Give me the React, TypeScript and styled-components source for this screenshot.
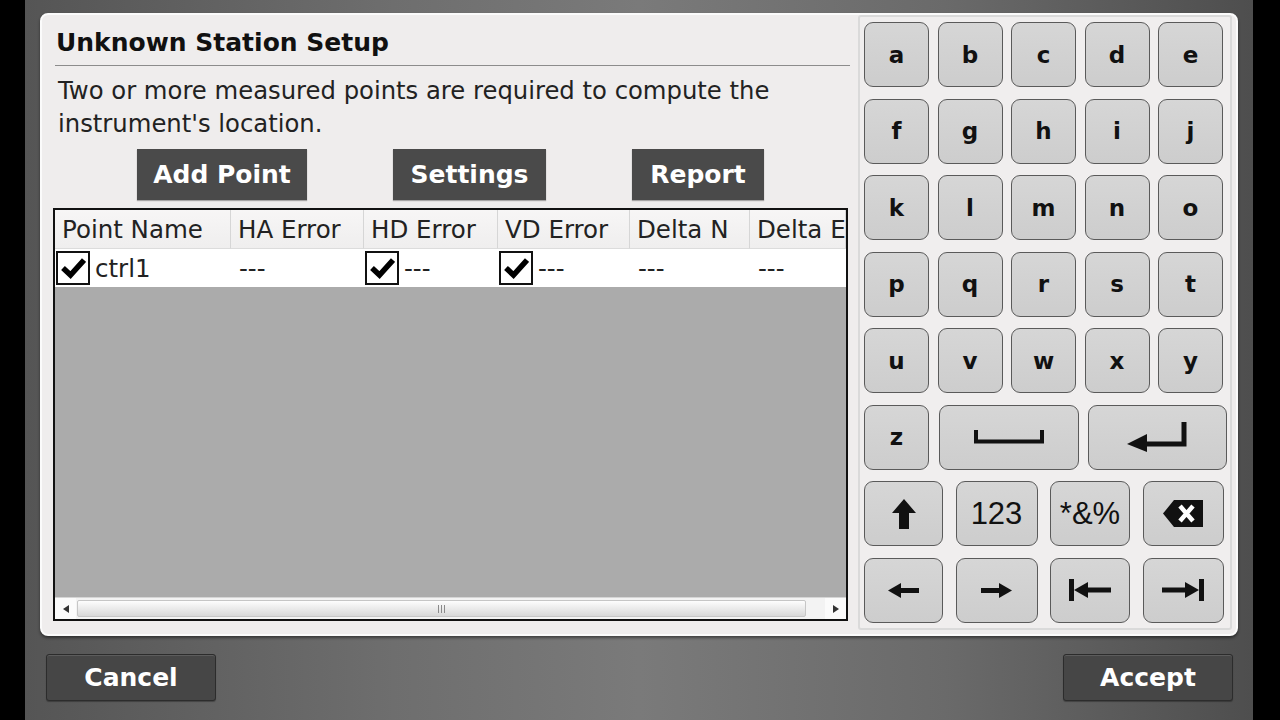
import styled, { createGlobalStyle } from 'styled-components';

const GlobalStyle = createGlobalStyle`
  html, body {
    margin: 0;
    padding: 0;
    background: #000;
    overflow: hidden;
  }
  body {
    font-family: "DejaVu Sans", "Open Sans", sans-serif;
    color: #1a1a1a;
  }
`;

const columns = ['Point Name', 'HA Error', 'HD Error', 'VD Error', 'Delta N', 'Delta E'];

// each cell of the single row: checked state (undefined = no box) and text
const row = [
  { check: true, text: 'ctrl1' },
  { text: '---' },
  { check: true, text: '---' },
  { check: true, text: '---' },
  { text: '---' },
  { text: '---' },
];

const letterRows = [
  ['a', 'b', 'c', 'd', 'e'],
  ['f', 'g', 'h', 'i', 'j'],
  ['k', 'l', 'm', 'n', 'o'],
  ['p', 'q', 'r', 's', 't'],
  ['u', 'v', 'w', 'x', 'y'],
];

const CheckMark = () => (
  <svg width="25" height="22" viewBox="0 0 25 22">
    <path d="M2 11 L9.5 18 L23 3" fill="none" stroke="#000" strokeWidth="5.5" strokeLinejoin="miter" />
  </svg>
);

const SpaceIcon = () => (
  <svg width="70" height="14" viewBox="0 0 70 14">
    <path d="M2 0 V11.5 H68 V0" fill="none" stroke="#111" strokeWidth="4" />
  </svg>
);

const EnterIcon = () => (
  <svg width="62" height="30" viewBox="0 0 62 30">
    <path d="M57 0 V22 H18" fill="none" stroke="#111" strokeWidth="5" />
    <path d="M0 22 L20 12 L20 30 Z" fill="#111" />
  </svg>
);

const ShiftIcon = () => (
  <svg width="24" height="30" viewBox="0 0 24 30">
    <path d="M12 0 L24 14 L17 14 L17 30 L7 30 L7 14 L0 14 Z" fill="#111" />
  </svg>
);

const BackspaceIcon = () => (
  <svg width="40" height="27" viewBox="0 0 40 27">
    <path d="M0 13.5 L11 0 H40 V27 H11 Z" fill="#111" />
    <path d="M17 6 L30 21 M30 6 L17 21" stroke="#fff" strokeWidth="4.5" />
  </svg>
);

const ArrowIcon = ({ flip }: { flip?: boolean }) => (
  <svg width="31" height="15" viewBox="0 0 31 15" style={flip ? { transform: 'scaleX(-1)' } : undefined}>
    <path d="M0 7.5 L13 0 V15 Z" fill="#111" />
    <path d="M10 7.5 H31" stroke="#111" strokeWidth="5" />
  </svg>
);

const TabIcon = ({ flip }: { flip?: boolean }) => (
  <svg width="42" height="22" viewBox="0 0 42 22" style={flip ? { transform: 'scaleX(-1)' } : undefined}>
    <path d="M2.5 0 V22" stroke="#111" strokeWidth="5" />
    <path d="M5 11 L19 3 V19 Z" fill="#111" />
    <path d="M16 11 H42" stroke="#111" strokeWidth="5" />
  </svg>
);

const App = () => {
  return (
    <>
      <GlobalStyle />
      <Device>
        <Panel>
          <SetupPane>
            <Title>Unknown Station Setup</Title>
            <Rule />
            <Description>
              Two or more measured points are required to compute the
              <br />
              instrument's location.
            </Description>
            <ActionRow>
              <ActionButton $width={170}>Add Point</ActionButton>
              <ActionButton $width={153}>Settings</ActionButton>
              <ActionButton $width={132}>Report</ActionButton>
            </ActionRow>
            <PointTable>
              <TableGrid>
                {columns.map((c) => (
                  <HeadCell key={c}>{c}</HeadCell>
                ))}
                {row.map((cell, i) => (
                  <DataCell key={i} $boxed={cell.check !== undefined}>
                    {cell.check !== undefined && (
                      <CheckBox>{cell.check && <CheckMark />}</CheckBox>
                    )}
                    <span>{cell.text}</span>
                  </DataCell>
                ))}
              </TableGrid>
              <EmptyArea />
              <ScrollBar>
                <ScrollArrow>
                  <svg width="6" height="8" viewBox="0 0 6 8">
                    <path d="M0 4 L6 0 V8 Z" fill="#333" />
                  </svg>
                </ScrollArrow>
                <ScrollTrack>
                  <ScrollThumb>
                    <Grip />
                  </ScrollThumb>
                </ScrollTrack>
                <ScrollArrow>
                  <svg width="6" height="8" viewBox="0 0 6 8">
                    <path d="M6 4 L0 0 V8 Z" fill="#333" />
                  </svg>
                </ScrollArrow>
              </ScrollBar>
            </PointTable>
          </SetupPane>

          <KeyPane>
            {letterRows.map((keys, r) => (
              <KeyRow key={r} $gap={8.5}>
                {keys.map((k) => (
                  <Key key={k} $width={65}>{k}</Key>
                ))}
              </KeyRow>
            ))}
            <KeyRow $gap={9.5}>
              <Key $width={65}>z</Key>
              <Key $width={140}><SpaceIcon /></Key>
              <Key $width={139}><EnterIcon /></Key>
            </KeyRow>
            <KeyRow $gap={12.5}>
              <Key $width={79}><ShiftIcon /></Key>
              <Key $width={82} $plain>123</Key>
              <Key $width={80} $plain>*&amp;%</Key>
              <Key $width={81}><BackspaceIcon /></Key>
            </KeyRow>
            <KeyRow $gap={12.5}>
              <Key $width={79}><ArrowIcon /></Key>
              <Key $width={82}><ArrowIcon flip /></Key>
              <Key $width={80}><TabIcon /></Key>
              <Key $width={81}><TabIcon flip /></Key>
            </KeyRow>
          </KeyPane>
        </Panel>

        <BottomBar>
          <FooterButton>Cancel</FooterButton>
          <FooterButton>Accept</FooterButton>
        </BottomBar>
      </Device>
    </>
  );
};

const Device = styled.div`
  width: 1228px;
  height: 720px;
  margin-left: 25px;
  box-sizing: border-box;
  padding: 13px 15px 0 15px;
  background: linear-gradient(90deg, #555 0%, #6e6e6e 30%, #7a7a7a 50%, #6a6a6a 75%, #4e4e4e 100%);
  display: flex;
  flex-direction: column;
`;

const Panel = styled.div`
  height: 623px;
  box-sizing: border-box;
  display: flex;
  background: #efeded;
  border: 2px solid #fbfbfb;
  border-radius: 8px;
  box-shadow: 0 2px 3px rgba(0, 0, 0, 0.45);
`;

const SetupPane = styled.div`
  width: 812px;
  flex-shrink: 0;
  box-sizing: border-box;
  padding: 0 6px 0 11px;
  display: flex;
  flex-direction: column;
`;

const Title = styled.div`
  padding: 13px 0 0 3px;
  font-size: 25px;
  line-height: 30px;
  font-weight: 700;
  color: #111;
`;

const Rule = styled.div`
  margin: 7px -2px 0 2px;
  border-bottom: 1px solid #8c8c8c;
`;

const Description = styled.div`
  margin-top: 8px;
  padding-left: 5px;
  font-size: 24.3px;
  line-height: 33px;
  color: #222;
`;

const ActionRow = styled.div`
  margin-top: 9px;
  display: flex;
  justify-content: center;
  gap: 86px;
`;

const ActionButton = styled.div<{ $width: number }>`
  width: ${({ $width }) => $width}px;
  height: 51px;
  display: flex;
  align-items: center;
  justify-content: center;
  background: #4a4a4a;
  color: #fff;
  font-size: 25px;
  font-weight: 700;
  box-shadow: 0 1px 1px rgba(0, 0, 0, 0.3);
`;

const PointTable = styled.div`
  margin-top: 8px;
  height: 413px;
  box-sizing: border-box;
  border: 2px solid #111;
  display: flex;
  flex-direction: column;
  overflow: hidden;
`;

const TableGrid = styled.div`
  display: grid;
  grid-template-columns: 176px 133px 134px 132px 120px 1fr;
  grid-template-rows: 39px 38px;
  white-space: nowrap;
`;

const HeadCell = styled.div`
  display: flex;
  align-items: center;
  padding-left: 7px;
  background: linear-gradient(#f7f6f6, #efeeee);
  border-right: 1px solid #d6d6d6;
  border-bottom: 1px solid #dcdcdc;
  font-size: 24.5px;
  color: #222;
  overflow: hidden;
`;

const DataCell = styled.div<{ $boxed: boolean }>`
  display: flex;
  align-items: center;
  gap: 5px;
  padding-left: ${({ $boxed }) => ($boxed ? 1 : 8)}px;
  background: #fff;
  font-size: 24.5px;
  color: #222;
  overflow: hidden;
`;

const CheckBox = styled.div`
  width: 34px;
  height: 34px;
  box-sizing: border-box;
  border: 2px solid #111;
  background: #fff;
  display: flex;
  align-items: center;
  justify-content: center;
`;

const EmptyArea = styled.div`
  flex: 1;
  background: #ababab;
`;

const ScrollBar = styled.div`
  height: 21px;
  display: flex;
  background: #f3f3f3;
  border-top: 1px solid #d5d5d5;
`;

const ScrollArrow = styled.div`
  width: 21px;
  display: flex;
  align-items: center;
  justify-content: center;
  background: #fbfbfb;
`;

const ScrollTrack = styled.div`
  flex: 1;
  padding: 2px 19px 2px 1px;
  display: flex;
`;

const ScrollThumb = styled.div`
  flex: 1;
  display: flex;
  align-items: center;
  justify-content: center;
  border: 1px solid #c6c6c6;
  border-radius: 2px;
  background: linear-gradient(#fdfdfd, #e9e9e9 55%, #d8d8d8);
`;

const Grip = styled.div`
  width: 7px;
  height: 8px;
  background: repeating-linear-gradient(90deg, #8a8a8a 0 1px, transparent 1px 3px);
`;

const KeyPane = styled.div`
  margin: 0 4px 4px 4px;
  flex: 1;
  min-width: 0;
  box-sizing: border-box;
  padding: 5px 4px;
  background: #f0eeee;
  border: 2px solid #dadada;
  border-radius: 3px;
  display: flex;
  flex-direction: column;
  gap: 11.5px;
`;

const KeyRow = styled.div<{ $gap: number }>`
  display: flex;
  gap: ${({ $gap }) => $gap}px;
`;

const Key = styled.div<{ $width: number; $plain?: boolean }>`
  width: ${({ $width }) => $width}px;
  flex-shrink: 0;
  height: 65px;
  box-sizing: border-box;
  display: flex;
  align-items: center;
  justify-content: center;
  border: 1.5px solid #5a5a5a;
  border-radius: 9px;
  background: linear-gradient(#d6d6d6, #cdcdcd);
  color: #111;
  font-family: ${({ $plain }) => ($plain ? '"Liberation Sans", Arial, sans-serif' : '"DejaVu Sans", sans-serif')};
  font-size: ${({ $plain }) => ($plain ? 31 : 23)}px;
  font-weight: ${({ $plain }) => ($plain ? 400 : 700)};
`;

const BottomBar = styled.div`
  flex: 1;
  display: flex;
  justify-content: space-between;
  align-items: flex-start;
  padding: 18px 5px 0 6px;
`;

const FooterButton = styled.div`
  width: 170px;
  height: 47px;
  box-sizing: border-box;
  display: flex;
  align-items: center;
  justify-content: center;
  background: #464646;
  border: 1px solid #2c2c2c;
  border-radius: 3px;
  box-shadow: inset 0 1px 0 #5c5c5c, 0 1px 1px rgba(0, 0, 0, 0.3);
  color: #fff;
  font-size: 25px;
  font-weight: 700;
`;

export default App;
